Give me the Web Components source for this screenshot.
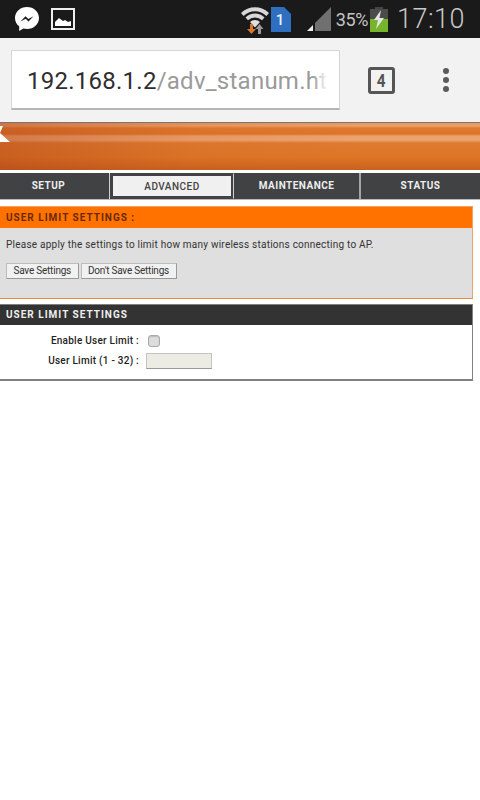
<!DOCTYPE html>
<html><head><meta charset="utf-8"><style>
html,body{margin:0;padding:0;background:#fff;height:800px;overflow:hidden}
body{font-family:Roboto,"Liberation Sans",sans-serif}
</style></head><body>
<status-bar></status-bar>
<browser-bar host="192.168.1.2" path="/adv_stanum.htm" tabs="4"></browser-bar>
<router-banner></router-banner>
<router-nav></router-nav>
<intro-box title="USER LIMIT SETTINGS :"></intro-box>
<limit-box title="USER LIMIT SETTINGS"></limit-box>
<script>
function def(name,html){customElements.define(name,class extends HTMLElement{connectedCallback(){if(this.shadowRoot)return;const r=this.attachShadow({mode:'open'});r.innerHTML=typeof html==='function'?html(this):html;}});}
def('status-bar',`<style>
:host{display:flex;align-items:center;height:38px;background:#1a1a1a;box-sizing:border-box;padding:0 0 0 14px;color:#ccc}
.l{display:flex;gap:11px;align-items:center}
.r{margin-left:auto;display:flex;align-items:center}
.pct{font:18px Roboto,sans-serif;color:#c4c4c4;margin-left:5px;letter-spacing:-.4px}
.time{font:300 27px Roboto,sans-serif;color:#c8c8c8;margin-left:9px;margin-right:15px;letter-spacing:.5px}
svg{display:block}
</style>
<div class="l">
<svg width="26" height="26" viewBox="0 0 26 26"><path d="M13 1C6.300 1 1 5.900 1 12c0 3.400 1.600 6.300 4.200 8.300V25l4.200-2.400c1.100.3 2.300.5 3.600.5 6.700 0 12-5 12-11.100S19.700 1 13 1z" fill="#fff"/><path d="M6.500 15.500l5-5.300 2.800 2.800 5.200-2.800-5 5.300-2.800-2.800z" fill="#1a1a1a"/></svg>
<svg width="24" height="22" viewBox="0 0 24 22"><rect x="1" y="1" width="22" height="20" fill="none" stroke="#eee" stroke-width="2"/><path d="M4 18v-4l4-4 4 3 2-1 3 2 3-1v5z" fill="#fff"/></svg>
</div>
<div class="r">
<svg width="28" height="30" viewBox="0 0 28 30"><path d="M0 9a20 20 0 0 1 28 0l-2.600 3a16 16 0 0 0-22.800 0z" fill="#d8d8d8"/><path d="M4.500 13.500a13.500 13.500 0 0 1 19 0l-2.500 2.800a10 10 0 0 0-14 0z" fill="#d8d8d8"/><path d="M9 18a7 7 0 0 1 10 0l-5 5.500z" fill="#e0e0e0"/><path d="M9 20v5H6l4.500 5 4.500-5h-3v-5z" fill="#d9772a"/><path d="M17 30v-5h-2.500l4-5 4 5H20v5z" fill="#9a9a9a"/></svg>
<svg width="20" height="25" viewBox="0 0 20 25" style="margin-left:2px"><path d="M0 0h13l7 7v18H0z" fill="#2f6fc0"/><text x="9" y="18" font-family="Roboto" font-size="15" font-weight="500" fill="#e8f0ff" text-anchor="middle">1</text></svg>
<svg width="25" height="24" viewBox="0 0 25 24" style="margin-left:15px"><path d="M25 0v24H9v-8z" fill="#707070"/><path d="M1 24l6-6v6z" fill="#eee"/></svg>
<span class="pct">35%</span>
<svg width="18" height="25" viewBox="0 0 18 25" style="margin-left:2px"><rect x="5" y="0" width="8" height="2" fill="#444"/><rect x="0" y="2" width="18" height="10" fill="#4b4b4b"/><rect x="0" y="12" width="18" height="13" fill="#76b52b"/><path d="M11 3L4 13h4l-2 9 8-11H9.500z" fill="#e4e4e4"/></svg>
<span class="time">17:10</span>
</div>`);
def('browser-bar',h=>`<style>
:host{display:flex;align-items:flex-start;height:84px;background:#f2f2f2;box-sizing:border-box;padding-top:12px}
.url{margin-left:11px;width:329px;height:60px;box-sizing:border-box;background:#fff;border:1px solid #d6d6d6;border-bottom:2px solid #b5b5b5;padding:0 15px;font:400 24px/61px Roboto,sans-serif;color:#2e2e2e;white-space:nowrap;overflow:hidden;letter-spacing:.25px;position:relative}
.url i{font-style:normal;color:#9a9a9a}
.fade{position:absolute;right:0;top:0;bottom:0;width:26px;background:linear-gradient(90deg,rgba(255,255,255,0),#fff 55%)}
.tab{margin:17px 0 0 28px;width:27px;height:27px;box-sizing:border-box;border:3px solid #555;border-radius:3px;font:700 18px/21px Roboto,sans-serif;color:#555;text-align:center}
.tab span{display:inline-block;transform:scaleX(.85)}
.menu{margin:18px 0 0 48px;display:flex;flex-direction:column;gap:3px}
.menu b{display:block;width:6px;height:6px;border-radius:50%;background:#5a5a5a}
</style><div class="url">${h.getAttribute('host')}<i>${h.getAttribute('path')}</i><span class="fade"></span></div><div class="tab"><span>${h.getAttribute('tabs')}</span></div><div class="menu"><b></b><b></b><b></b></div>`);
def('router-banner',`<style>
:host{display:block;height:48px;box-sizing:border-box;border-top:1px solid #777;position:relative;
background:
linear-gradient(90deg,rgba(170,60,20,.4),rgba(200,90,30,.15) 40%,rgba(230,130,40,0) 75%),
linear-gradient(180deg,#e8965a 0,#eba06a 3px,#e07a30 5px,#dd7428 11px,#eca06c 13px,#eda671 17px,#de7a30 20px,#dd7726 34px,#c9601f 47px)}
:host::before{content:"";position:absolute;left:0;top:3px;width:11px;height:16px;background:#fff;clip-path:polygon(0 0,3px 0,0 7px,10px 16px,0 16px)}
</style>`);
def('router-nav',`<style>
:host{display:grid;grid-template-columns:110px 124px 127px 1fr;height:26px;margin-top:3px;background:#404244;border-bottom:1px solid #b8b8b8;position:relative}
div{font:700 10px/26px Roboto,sans-serif;letter-spacing:.48px;color:#eee;text-align:center;border-right:1px solid #d2d2d2;box-sizing:border-box;height:26px}
.s{padding-right:12px}
div:last-child{border-right:0}
.a{background:#f0f0f0;color:#444;font-weight:500;outline:2px solid #404244;outline-offset:-3px;border:1px solid #404244;border-right:1px solid #d2d2d2;line-height:25px}
.m{border-right:2px solid #a5a5a5}
</style><div class="s">SETUP</div><div class="a">ADVANCED</div><div class="m">MAINTENANCE</div><div>STATUS</div>`);
def('intro-box',h=>`<style>
:host{display:block;width:473px;height:93px;margin-top:6px;box-sizing:border-box;background:#dfdfdf;border:1px solid #f0a060;border-left:0;border-bottom:1px solid #ee8a3c}
.h{height:21px;background:#ff7200;color:#6a2a00;font:700 10px/21px Roboto,sans-serif;letter-spacing:1px;padding-left:6px}
p{margin:0;padding:11px 0 0 6px;font:400 10px/12px Roboto,sans-serif;color:#333;letter-spacing:.23px}
.b{display:flex;gap:2px;padding:12px 0 0 6px}
button{all:unset;box-sizing:border-box;height:16px;padding:0 6.500px;background:#f1f1f1;border:1px solid #bdbdbd;border-right-color:#999;border-bottom-color:#999;font:400 10px/14px Roboto,sans-serif;color:#333;letter-spacing:-.22px}
</style><div class="h">${h.getAttribute('title')}</div><p>Please apply the settings to limit how many wireless stations connecting to AP.</p><div class="b"><button>Save Settings</button><button>Don't Save Settings</button></div>`);
def('limit-box',h=>`<style>
:host{display:block;width:473px;height:77px;margin-top:5px;box-sizing:border-box;background:#fff;border:solid #808080;border-width:1px 1px 2px 0}
.h{height:20px;background:#333;color:#eee;font:700 10px/20px Roboto,sans-serif;letter-spacing:1px;padding-left:6px}
.row{display:grid;grid-template-columns:139px auto;column-gap:7px;align-items:center;font:500 10px/12px Roboto,sans-serif;color:#222}
.row span{text-align:right;letter-spacing:.25px}
.c{width:12px;height:12px;box-sizing:border-box;background:#dcdcdc;border:1px solid #aaa;border-radius:3px;margin:0 0 0 2px;box-shadow:inset 0 1px 1px #bbb}
.i{width:66px;height:16px;box-sizing:border-box;background:#ecebe4;border:1px solid #c4c4c0;border-bottom-color:#999}
.r1{height:16px;margin-top:8px}.r2{height:16px;margin-top:4px}
</style><div class="h">${h.getAttribute('title')}</div><div class="row r1"><span>Enable User Limit :</span><div class="c"></div></div><div class="row r2"><span>User Limit (1 - 32) :</span><div class="i"></div></div>`);
</script>
</body></html>
